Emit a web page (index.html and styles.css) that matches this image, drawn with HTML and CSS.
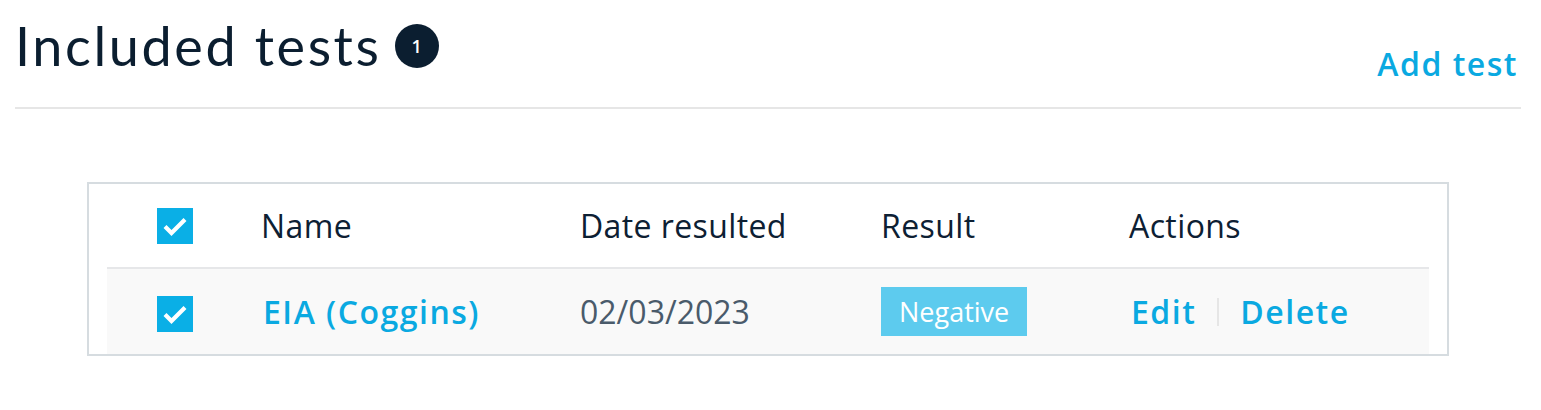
FILE: index.html
```html
<!DOCTYPE html>
<html lang="en">
<head>
    <meta charset="UTF-8">
    <meta name="viewport" content="width=device-width, initial-scale=1.0">
    <title>Included tests</title>
    <link rel="stylesheet" href="styles.css">
</head>
<body>

    <div class="page">
        <div class="section-header">
            <h1>Included tests <span class="count">1</span></h1>
            <a href="#" class="add-link">Add test</a>
        </div>

        <div class="tests-table">
            <div class="row head">
                <div class="cell check">
                    <span class="checkbox">
                        <svg viewBox="0 0 36 36" width="36" height="36"><path d="M8 18.5 L14.5 25 L28 11.5" fill="none" stroke="#fff" stroke-width="4.2"/></svg>
                    </span>
                </div>
                <div class="cell">Name</div>
                <div class="cell">Date resulted</div>
                <div class="cell">Result</div>
                <div class="cell">Actions</div>
            </div>
            <div class="row item">
                <div class="cell check">
                    <span class="checkbox">
                        <svg viewBox="0 0 36 36" width="36" height="36"><path d="M8 18.5 L14.5 25 L28 11.5" fill="none" stroke="#fff" stroke-width="4.2"/></svg>
                    </span>
                </div>
                <div class="cell"><a href="#" class="link">EIA (Coggins)</a></div>
                <div class="cell date">02/03/2023</div>
                <div class="cell"><span class="result-tag">Negative</span></div>
                <div class="cell actions">
                    <a href="#" class="link">Edit</a>
                    <span class="divider"></span>
                    <a href="#" class="link">Delete</a>
                </div>
            </div>
        </div>
    </div>

</body>
</html>
```

FILE: styles.css
```css
body {
    margin: 0;
    font-family: "Open Sans", Arial, sans-serif;
    color: #0d2033;
    background-color: #ffffff;
}

.page {
    padding: 0 20px 0 15px;
}

.section-header {
    display: flex;
    justify-content: space-between;
    align-items: flex-end;
    padding-top: 19px;
    padding-bottom: 28px;
    border-bottom: 2px solid #e6e6e6;
}

h1 {
    margin: 0 0 6px 0;
    font-family: Lato, "Open Sans", sans-serif;
    font-weight: 400;
    font-size: 54px;
    line-height: 54px;
    letter-spacing: 2.6px;
    color: #0b1e30;
    display: flex;
    align-items: center;
}

.count {
    display: inline-flex;
    align-items: center;
    justify-content: center;
    width: 44px;
    height: 44px;
    margin-left: 13px;
    border-radius: 50%;
    background-color: #0b1e30;
    color: #ffffff;
    font-family: "Open Sans", sans-serif;
    font-size: 18px;
    font-weight: 600;
    letter-spacing: 0;
}

.add-link {
    font-size: 32px;
    line-height: 30px;
    font-weight: 600;
    letter-spacing: 1.5px;
    color: #0aa9e1;
    text-decoration: none;
    margin-right: 3px;
}

.tests-table {
    margin: 73px 72px 0;
    padding: 0 18px;
    border: 2px solid #d6dce0;
}

.row {
    display: grid;
    grid-template-columns: 154px 319px 301px 248px 1fr;
    align-items: center;
}

.row.head {
    height: 83px;
    font-size: 32px;
    font-weight: 500;
    letter-spacing: 0.4px;
    border-bottom: 2px solid #e6e7e9;
}

.row.item {
    height: 85px;
    background-color: #f9f9f9;
    font-size: 32px;
}

.cell.check {
    padding-left: 50px;
}

.checkbox {
    display: block;
    width: 36px;
    height: 36px;
    background-color: #0aafe6;
}

.checkbox svg {
    display: block;
}

.row.item .checkbox {
    margin-top: 4px;
}

.link {
    color: #0aa9e1;
    font-weight: 600;
    letter-spacing: 1.5px;
    text-decoration: none;
}

.row.item .cell:nth-child(2) {
    padding-left: 2px;
}

.date {
    color: #4a5b6b;
}

.result-tag {
    display: inline-flex;
    align-items: center;
    height: 49px;
    padding: 0 18px;
    background-color: #5dcbee;
    color: #ffffff;
    font-size: 27px;
    margin-top: -2px;
}

.actions {
    display: flex;
    align-items: center;
    padding-left: 2px;
}

.divider {
    display: inline-block;
    width: 2px;
    height: 28px;
    margin: 0 21px;
    background-color: #e6e6e6;
}
```
